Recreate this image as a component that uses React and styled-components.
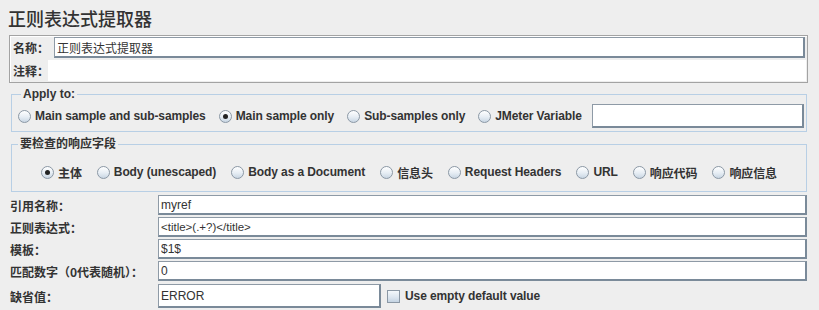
import React from "react";
import styled, { createGlobalStyle } from "styled-components";

const GlobalStyle = createGlobalStyle`
    * { box-sizing: border-box; }
    body {
        margin: 0;
        background: #eeeeee;
        font-family: "Liberation Sans", "Noto Sans CJK SC", sans-serif;
        color: #333333;
    }
`;

export default function App() {
    return (
        <>
            <GlobalStyle />
            <Page>
                <Title>正则表达式提取器</Title>

                <NamePanel>
                    <NameRow>
                        <PanelLabel width={43}>名称：</PanelLabel>
                        <TextField defaultValue="正则表达式提取器" readOnly />
                    </NameRow>
                    <NameRow>
                        <PanelLabel width={37}>注释：</PanelLabel>
                        <CommentArea />
                    </NameRow>
                </NamePanel>

                <Group pad="3px 2px 3px 6px">
                    <Legend>Apply to:</Legend>
                    <RadioRow spacing={13}>
                        <Radio label="Main sample and sub-samples" />
                        <Radio label="Main sample only" checked />
                        <Radio label="Sub-samples only" />
                        <Radio label="JMeter Variable" />
                        <VarField readOnly />
                    </RadioRow>
                </Group>

                <Group pad="12px 3px 10px 3px" top={5}>
                    <Legend>要检查的响应字段</Legend>
                    <RadioRow center spacing={15}>
                        <Radio label="主体" checked />
                        <Radio label="Body (unescaped)" />
                        <Radio label="Body as a Document" />
                        <Radio label="信息头" />
                        <Radio label="Request Headers" />
                        <Radio label="URL" />
                        <Radio label="响应代码" />
                        <Radio label="响应信息" />
                    </RadioRow>
                </Group>

                <Form>
                    <FormLabel>引用名称：</FormLabel>
                    <FormField defaultValue="myref" readOnly />

                    <FormLabel>正则表达式：</FormLabel>
                    <FormField defaultValue="<title>(.+?)</title>" readOnly small />

                    <FormLabel>模板：</FormLabel>
                    <FormField defaultValue="$1$" readOnly />

                    <FormLabel>匹配数字（0代表随机）：</FormLabel>
                    <FormField defaultValue="0" readOnly />

                    <FormLabel>缺省值：</FormLabel>
                    <DefaultRow>
                        <DefaultField defaultValue="ERROR" readOnly />
                        <CheckItem>
                            <CheckBox />
                            <RadioText>Use empty default value</RadioText>
                        </CheckItem>
                    </DefaultRow>
                </Form>
            </Page>
        </>
    );
}

function Radio({ label, checked }) {
    return (
        <RadioItem>
            <RadioCircle checked={checked} />
            <RadioText>{label}</RadioText>
        </RadioItem>
    );
}

const Page = styled.div`
    width: 819px;
    height: 310px;
    overflow: hidden;
`;

const Title = styled.div`
    padding: 7px 0 0 8px;
    height: 35px;
    font-family: "Noto Sans CJK SC", sans-serif;
    font-size: 18px;
    font-weight: 500;
    line-height: 22px;
    color: #333333;
`;

const NamePanel = styled.div`
    margin-left: 9px;
    width: 799px;
    height: 48px;
    border: 1px solid #a3a3a3;
    box-shadow: inset 1px 1px 0 #ffffff;
    padding: 1px 1px 0 1px;
    display: flex;
    flex-direction: column;
    gap: 2px;
`;

const NameRow = styled.div`
    display: flex;
    align-items: stretch;
    height: 21px;
`;

const PanelLabel = styled.div`
    width: ${(p) => p.width}px;
    flex: none;
    padding-left: 2px;
    font-family: "Noto Sans CJK SC", sans-serif;
    font-size: 12px;
    font-weight: 700;
    white-space: nowrap;
    display: flex;
    align-items: center;
`;

const TextField = styled.input`
    flex: 1;
    min-width: 0;
    margin-right: 1px;
    height: 21px;
    background: #ffffff;
    border-top: 1px solid #8e9aa6;
    border-left: 1px solid #8e9aa6;
    border-right: 2px solid #7a8a99;
    border-bottom: 2px solid #7a8a99;
    padding: 0 2px;
    font-family: "Noto Sans CJK SC", "Liberation Sans", sans-serif;
    font-size: 12px;
    color: #333333;
    outline: none;
`;

const CommentArea = styled.div`
    flex: 1;
    height: 21px;
    background: #ffffff;
`;

const Group = styled.fieldset`
    margin: ${(p) => p.top || 4}px 12px 0 11px;
    padding: ${(p) => p.pad};
    border: 1px solid #b8cfe5;
    min-width: 0;
`;

const Legend = styled.legend`
    margin-left: 3px;
    padding: 0 2px;
    font-family: "Liberation Sans", "Noto Sans CJK SC", sans-serif;
    font-size: 12px;
    line-height: 14px;
    font-weight: 700;
    color: #333333;
`;

const RadioRow = styled.div`
    display: flex;
    align-items: center;
    justify-content: ${(p) => (p.center ? "center" : "flex-start")};
    gap: ${(p) => p.spacing}px;
    min-height: 18px;
`;

const RadioItem = styled.div`
    display: flex;
    align-items: center;
    gap: 4px;
`;

const RadioCircle = styled.span`
    width: 13px;
    height: 13px;
    flex: none;
    border-radius: 50%;
    border: 1px solid #8b98a5;
    background: linear-gradient(180deg, #ffffff 0%, #e6edf4 55%, #c9d6e3 100%);
    display: flex;
    align-items: center;
    justify-content: center;

    &::after {
        content: "";
        display: ${(p) => (p.checked ? "block" : "none")};
        width: 5px;
        height: 5px;
        border-radius: 50%;
        background: #222222;
    }
`;

const RadioText = styled.span`
    font-family: "Liberation Sans", "Noto Sans CJK SC", sans-serif;
    font-size: 12px;
    font-weight: 700;
    letter-spacing: -0.1px;
    color: #333333;
    white-space: nowrap;
`;

const VarField = styled(TextField)`
    flex: 1;
    height: 24px;
    margin-left: -3px;
    margin-right: 0;
`;

const Form = styled.div`
    margin: 3px 12px 0 10px;
    display: grid;
    grid-template-columns: 148px 1fr;
    grid-auto-rows: 20px;
    row-gap: 2px;

    & > :nth-last-child(-n + 2) {
        margin-top: 1px;
        height: 24px;
    }
`;

const FormLabel = styled.div`
    font-family: "Noto Sans CJK SC", sans-serif;
    font-size: 12px;
    font-weight: 700;
    color: #333333;
    display: flex;
    align-items: center;
    white-space: nowrap;
`;

const FormField = styled(TextField)`
    height: 20px;
    margin-right: 0;
    font-family: "Liberation Sans", sans-serif;
    font-size: ${(p) => (p.small ? "11.5px" : "12px")};
`;

const DefaultRow = styled.div`
    display: flex;
    align-items: center;
    gap: 6px;
`;

const DefaultField = styled(TextField)`
    flex: none;
    width: 223px;
    height: 24px;
    margin-right: 0;
    font-family: "Liberation Sans", sans-serif;
`;

const CheckItem = styled.div`
    display: flex;
    align-items: center;
    gap: 5px;
`;

const CheckBox = styled.span`
    width: 13px;
    height: 13px;
    border: 1px solid #8b98a5;
    background: linear-gradient(180deg, #f4f8fb 0%, #dbe5ef 60%, #c4d3e2 100%);
`;
